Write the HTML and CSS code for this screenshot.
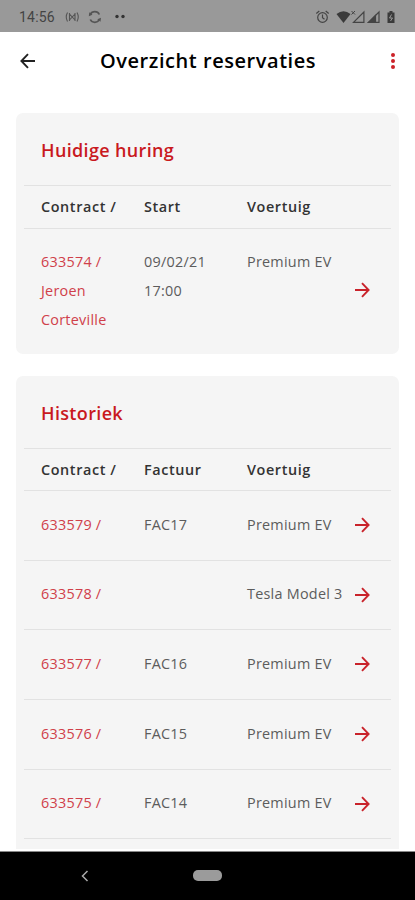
FILE: index.html
```html
<!DOCTYPE html>
<html lang="nl">
<head>
    <meta charset="utf-8">
    <title>Overzicht reservaties</title>
    <link rel="stylesheet" href="styles.css">
</head>
<body>
    <svg class="symbols">
        <symbol id="arrow" viewBox="0 0 16 16">
            <path d="M1 8h13M8 1.2L14.6 8 8 14.8" fill="none" stroke="currentColor" stroke-width="1.9"/>
        </symbol>
    </svg>

    <div class="statusbar">
        <span class="time">14:56</span>
        <svg class="left-icons" width="62" height="16" viewBox="0 0 62 16" fill="none" stroke="#555" stroke-width="1.1">
            <path d="M2.500 3.500q-2.500 4.500 0 9M4.500 4v8M4.500 5l5.500 6M10 4v8M10 5l-5.500 6M12 3.500q2.500 4.500 0 9"/>
            <path d="M25.300 5.500a5 5 0 0 1 9 0M25.300 10.500a5 5 0 0 0 9 0" stroke-width="1.700"/>
            <path d="M23.800 7.300l.5-4 3.200 2.500zM36 8.700l-.5 4-3.200-2.500z" fill="#555" stroke="none"/>
            <circle cx="52" cy="7.500" r="1.700" fill="#333" stroke="none"/>
            <circle cx="58" cy="7.500" r="1.700" fill="#333" stroke="none"/>
        </svg>
        <svg class="right-icons" width="82" height="16" viewBox="0 0 82 16" fill="none" stroke="#444" stroke-width="1.200">
            <circle cx="5.500" cy="8.500" r="4.800"/>
            <path d="M5.500 5.500v3.200l2 1.500M-.7 4.500l3-2.500M11.700 4.500l-3-2.500"/>
            <path d="M19.500 5q7-5.500 14 0L26.500 14z" fill="#3a3a3a" stroke="none"/>
            <path d="M34.500 2l3.500 3.500M38 2l-3.500 3.500" stroke-width="1"/>
            <path d="M36.500 13.400L46.900 3v10.400z"/>
            <path d="M51.500 13.400L62 3v10.400z"/>
            <path d="M51.500 13.400L58.500 6.500v6.900z" fill="#444"/>
            <path d="M70.500 3.500h2V2h3v1.500h2V14h-7z" fill="#3a3a3a" stroke="none"/>
            <path d="M74.500 5.500l-2 3.500h3l-2 3" stroke="#999" stroke-width="1"/>
        </svg>
    </div>

    <div class="header">
        <svg class="arrow back"><use href="#arrow"/></svg>
        <h1>Overzicht reservaties</h1>
        <div class="menu"><i></i><i></i><i></i></div>
    </div>

    <div class="content">
        <div class="card">
            <h2>Huidige huring</h2>
            <div class="row head">
                <span>Contract /</span>
                <span>Start</span>
                <span>Voertuig</span>
            </div>
            <div class="row current">
                <a>633574 /<br>Jeroen<br>Corteville</a>
                <span>09/02/21<br>17:00</span>
                <span>Premium EV</span>
                <svg class="arrow"><use href="#arrow"/></svg>
            </div>
        </div>

        <div class="card">
            <h2>Historiek</h2>
            <div class="row head">
                <span>Contract /</span>
                <span>Factuur</span>
                <span>Voertuig</span>
            </div>
            <div class="row">
                <a>633579 /</a>
                <span>FAC17</span>
                <span>Premium EV</span>
                <svg class="arrow"><use href="#arrow"/></svg>
            </div>
            <div class="row">
                <a>633578 /</a>
                <span></span>
                <span>Tesla Model 3</span>
                <svg class="arrow"><use href="#arrow"/></svg>
            </div>
            <div class="row">
                <a>633577 /</a>
                <span>FAC16</span>
                <span>Premium EV</span>
                <svg class="arrow"><use href="#arrow"/></svg>
            </div>
            <div class="row">
                <a>633576 /</a>
                <span>FAC15</span>
                <span>Premium EV</span>
                <svg class="arrow"><use href="#arrow"/></svg>
            </div>
            <div class="row">
                <a>633575 /</a>
                <span>FAC14</span>
                <span>Premium EV</span>
                <svg class="arrow"><use href="#arrow"/></svg>
            </div>
            <div class="row"></div>
        </div>
    </div>

    <div class="navbar">
        <svg width="8" height="12" viewBox="0 0 8 12"><path d="M6.500 1L1.500 6l5 5" fill="none" stroke="#aaa" stroke-width="1.500"/></svg>
        <div class="pill"></div>
    </div>
</body>
</html>
```
FILE: styles.css
```css
* {
    box-sizing: border-box;
}
body {
    margin: 0;
    height: 900px;
    overflow: hidden;
    display: flex;
    flex-direction: column;
    background-color: #fff;
    font-family: "Open Sans", sans-serif;
    font-size: 14.4px;
    color: #5c5c5c;
}
.symbols {
    display: none;
}
.statusbar {
    height: 32px;
    flex: none;
    display: flex;
    align-items: center;
    padding: 1px 16px 0 19px;
    background-color: #999;
}
.time {
    width: 46px;
    font-family: Roboto, sans-serif;
    font-size: 14px;
    letter-spacing: 0.2px;
    color: #444;
}
.right-icons {
    margin-left: auto;
    overflow: visible;
}
.header {
    height: 59px;
    flex: none;
    display: flex;
    align-items: center;
    padding: 0 20px 2px;
}
h1 {
    margin: 0 0 0 64px;
    font-size: 20px;
    font-weight: 600;
    letter-spacing: 0.550px;
    color: #000;
}
.arrow {
    width: 16px;
    height: 16px;
    color: #c9232b;
}
.back {
    color: #222;
    transform: scaleX(-1);
}
.menu {
    display: flex;
    flex-direction: column;
    gap: 2px;
    margin-left: auto;
}
.menu i {
    width: 4px;
    height: 4px;
    border-radius: 50%;
    background-color: #cc2229;
}
.content {
    height: 758px;
    flex: none;
    overflow: hidden;
    padding: 22px 16px 0;
}
.card {
    margin-bottom: 22px;
    padding: 0 8px;
    border-radius: 7px;
    background-color: #f5f5f5;
}
h2 {
    margin: 0;
    padding: 2px 17px 0;
    height: 72px;
    line-height: 71px;
    font-size: 18px;
    font-weight: 600;
    letter-spacing: 0.350px;
    color: #c9191e;
}
.row {
    display: grid;
    grid-template-columns: 103px 103px 107px 16px;
    align-items: center;
    height: 69.700px;
    padding: 0 17px 2px;
    border-top: 1px solid #e2e2e2;
    line-height: 29.300px;
    letter-spacing: 0.250px;
    white-space: nowrap;
}
.row a {
    color: #d0404a;
}
.row .arrow {
    margin-top: 1px;
}
.head {
    height: 42.500px;
    padding-bottom: 0;
    font-weight: 600;
    letter-spacing: 0.600px;
    color: #333;
}
.current {
    height: 126px;
    padding-top: 18px;
    align-items: start;
}
.current .arrow {
    margin-top: 35px;
}
.navbar {
    height: 49px;
    flex: none;
    display: flex;
    align-items: center;
    margin-top: 2px;
    padding: 0 0 1px 81px;
    background-color: #000;
    border-top: 1px solid #888;
}
.pill {
    width: 29px;
    height: 11px;
    margin-left: 104px;
    border-radius: 5px;
    background-color: #9b9b9b;
}
```
